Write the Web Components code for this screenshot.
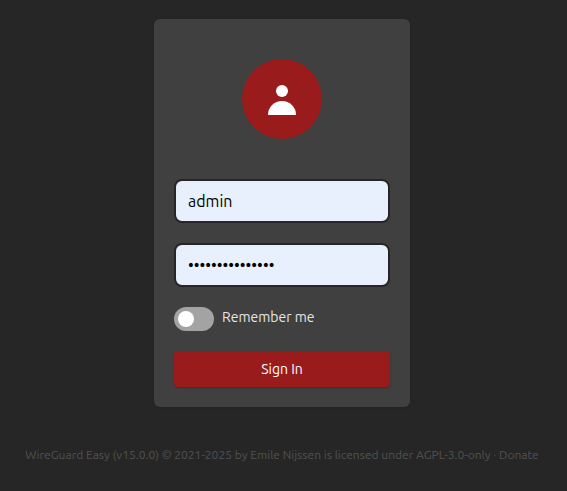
<!DOCTYPE html>
<html lang="en">
<head>
<meta charset="utf-8">
<title>WireGuard Easy</title>
<style>
html, body { margin: 0; height: 100%; background: #262626; overflow: hidden; }
body { font-family: Ubuntu, "Noto Sans", sans-serif; }
</style>
</head>
<body>
<login-page></login-page>
<script>
const define = (name, markup) => {
  const template = document.createElement('template');
  template.innerHTML = markup;
  customElements.define(name, class extends HTMLElement {
    constructor() {
      super();
      this.attachShadow({ mode: 'open' }).append(template.content.cloneNode(true));
    }
  });
};

define('user-avatar', `
<style>
:host { display: block; width: 80px; height: 80px; margin: 20px auto 40px; border-radius: 50%; background: #991b1b; }
svg { display: block; width: 80px; height: 80px; fill: #fff; }
</style>
<svg viewBox="0 0 80 80"><circle cx="40" cy="32" r="6"/><path d="M26 56a14 14 0 0 1 28 0z"/></svg>`);

define('text-field', `
<style>
:host { display: flex; align-items: center; box-sizing: border-box; height: 44px; margin-bottom: 20px; padding: 0 12px;
  border: 2px solid #262626; border-radius: 8px; background: #e8f0fe; color: #000; font-size: 16px; line-height: 24px; }
span { white-space: nowrap; }
</style>
<span><slot></slot></span>`);

define('toggle-row', `
<style>
:host { display: flex; height: 24px; gap: 8px; margin-bottom: 20px; color: #e5e5e5; font-size: 14px; line-height: 20px; white-space: nowrap; }
.switch { box-sizing: border-box; width: 40px; height: 24px; padding: 4px; border-radius: 12px; background: #a3a3a3; }
.knob { width: 16px; height: 16px; border-radius: 50%; background: #fff; }
</style>
<div class="switch"><div class="knob"></div></div><span><slot></slot></span>`);

define('submit-button', `
<style>
:host { display: block; height: 36px; border-radius: 4px; background: #991b1b; color: #fff; text-align: center;
  font-size: 14px; line-height: 36px; box-shadow: 0 1px 2px rgba(0,0,0,.2); }
</style>
<slot></slot>`);

define('login-card', `
<style>
:host { display: block; box-sizing: border-box; width: 256px; height: 388px; padding: 20px; border-radius: 6px; background: #404040;
  box-shadow: 0 1px 3px rgba(0,0,0,.12); }
</style>
<slot></slot>`);

define('page-footer', `
<style>
:host { display: block; margin-top: 40px; color: #525252; font-size: 12px; line-height: 16px; white-space: nowrap; }
</style>
<slot></slot>`);

define('login-page', `
<style>
:host { display: flex; flex-direction: column; align-items: center; box-sizing: border-box; width: 564px; padding-top: 19px; }
</style>
<login-card>
  <user-avatar></user-avatar>
  <text-field>admin</text-field>
  <text-field>•••••••••••••••</text-field>
  <toggle-row>Remember me</toggle-row>
  <submit-button>Sign In</submit-button>
</login-card>
<page-footer>WireGuard Easy (v15.0.0) © 2021-2025 by Emile Nijssen is licensed under AGPL-3.0-only · Donate</page-footer>`);
</script>
</body>
</html>
